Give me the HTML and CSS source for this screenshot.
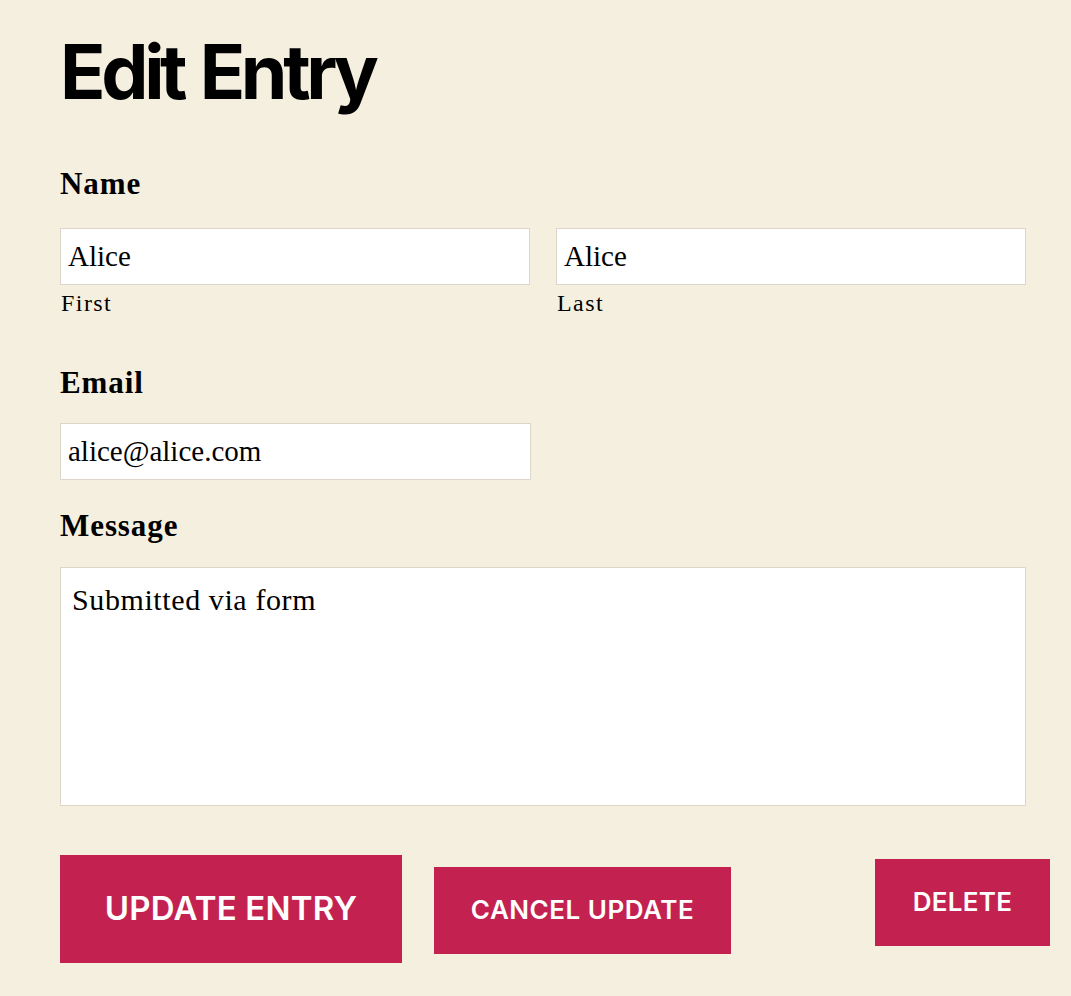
FILE: index.html
```html
<!DOCTYPE html>
<html lang="en">
<head>
<meta charset="utf-8">
<title>Edit Entry</title>
<link rel="stylesheet" href="styles.css">
</head>
<body>
<main class="page">
  <h1 class="title">Edit Entry</h1>
  <form class="entry-form">
    <div class="field field-name">
      <div class="field-label">Name</div>
      <div class="name-row">
        <div class="name-part">
          <input class="text-input" type="text" value="Alice">
          <div class="sub-label">First</div>
        </div>
        <div class="name-part">
          <input class="text-input" type="text" value="Alice">
          <div class="sub-label">Last</div>
        </div>
      </div>
    </div>
    <div class="field field-email">
      <div class="field-label">Email</div>
      <input class="text-input email-input" type="email" value="alice@alice.com">
    </div>
    <div class="field field-message">
      <div class="field-label">Message</div>
      <textarea class="text-area">Submitted via form</textarea>
    </div>
    <div class="actions">
      <button type="button" class="btn btn-update">Update Entry</button>
      <button type="button" class="btn btn-cancel">Cancel Update</button>
      <button type="button" class="btn btn-delete">Delete</button>
    </div>
  </form>
</main>
</body>
</html>
```
FILE: styles.css
```css
html, body {
  margin: 0;
  padding: 0;
  background: #f5efe0;
}
body {
  font-family: "Liberation Serif", "Times New Roman", serif;
  color: #000;
}
.page {
  padding: 0 45px 40px 60px;
}
.title {
  margin: 34px 0 0;
  font-family: Inter, "Noto Sans", sans-serif;
  font-weight: 700;
  font-size: 75px;
  line-height: 76px;
  letter-spacing: -0.058em;
  word-spacing: 0.04em;
  color: #000;
}
.field-label {
  font-weight: 700;
  font-size: 31px;
  line-height: 36px;
  letter-spacing: 0.03em;
}
.field-name {
  margin-top: 56px;
}
.field-name .field-label {
  margin-bottom: 26px;
}
.name-row {
  display: grid;
  grid-template-columns: 1fr 1fr;
  column-gap: 26px;
}
.text-input {
  display: block;
  box-sizing: border-box;
  width: 100%;
  height: 57px;
  margin: 0;
  padding: 0 7px;
  border: 1px solid #dcd7ca;
  border-radius: 0;
  background: #fff;
  font-family: "Liberation Serif", "Times New Roman", serif;
  font-size: 29px;
  color: #000;
  outline: none;
}
.sub-label {
  margin-top: 5px;
  margin-left: 1px;
  font-size: 24px;
  line-height: 27.6px;
  letter-spacing: 0.06em;
}
.field-email {
  margin-top: 47px;
}
.field-email .field-label {
  margin-bottom: 22px;
}
.email-input {
  width: 471px;
}
.field-message {
  margin-top: 28px;
}
.field-message .field-label {
  margin-bottom: 23px;
}
.text-area {
  display: block;
  box-sizing: border-box;
  width: 100%;
  height: 239px;
  margin: 0;
  padding: 14px 11px;
  border: 1px solid #dcd7ca;
  border-radius: 0;
  background: #fff;
  font-family: "Liberation Serif", "Times New Roman", serif;
  font-size: 30px;
  line-height: 1.2;
  letter-spacing: 0.02em;
  color: #000;
  resize: none;
  outline: none;
}
.actions {
  display: flex;
  align-items: flex-start;
  margin-top: 49px;
  margin-right: -24px;
}
.btn {
  border: none;
  border-radius: 0;
  background: #c32251;
  color: #fff;
  font-family: Inter, "Noto Sans", sans-serif;
  font-weight: 600;
  text-transform: uppercase;
  line-height: 1;
  cursor: pointer;
}
.btn-update {
  font-size: 33px;
  letter-spacing: 0.005em;
  height: 108px;
  width: 342px;
  padding: 0;
}
.btn-cancel {
  margin-top: 12px;
  margin-left: 32px;
  font-size: 26px;
  letter-spacing: 0.02em;
  height: 87px;
  width: 297px;
  padding: 0;
}
.btn-delete {
  margin-top: 4px;
  margin-left: auto;
  font-size: 26px;
  letter-spacing: 0.01em;
  height: 87px;
  width: 175px;
  padding: 0;
}
```
